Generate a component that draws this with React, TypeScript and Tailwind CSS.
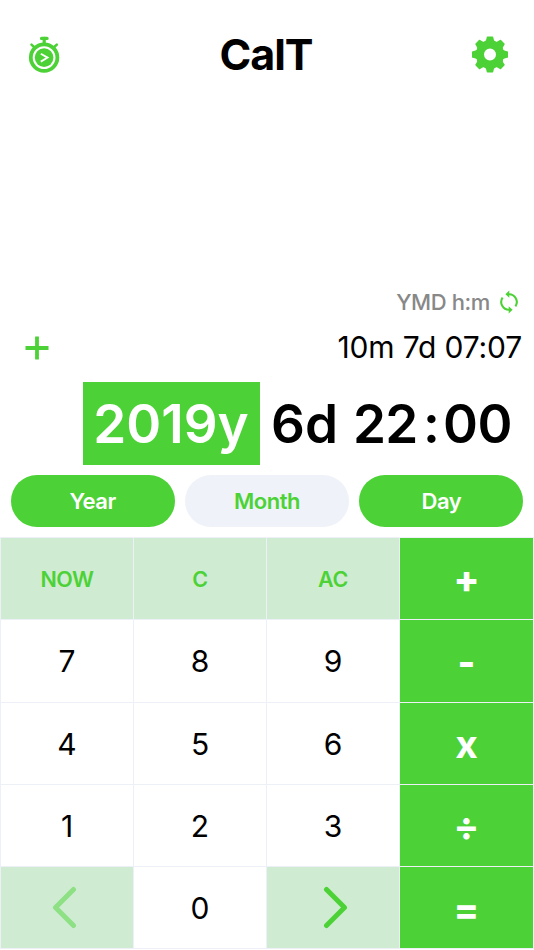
import type { ReactNode } from "react";

function StopwatchIcon() {
  return (
    <svg width="34" height="38" viewBox="0 0 34 38" fill="none" stroke="#4cd236">
      <path d="M14.5 2.4h5.6M17.2 2v6" strokeWidth="3.2" strokeLinecap="round" />
      <path d="M4.5 8.6l3.6 3.4M29.8 8.6l-3.6 3.4" strokeWidth="2.6" strokeLinecap="round" />
      <circle cx="17.1" cy="21.6" r="13.3" strokeWidth="3.8" />
      <circle cx="17.1" cy="21.6" r="9.3" fill="#4cd236" stroke="none" />
      <path d="M13.8 17.7l6.8 3.9-6.8 4" stroke="#fff" strokeWidth="1.8" />
    </svg>
  );
}

function GearIcon() {
  const angles = [0, 45, 90, 135, 180, 225, 270, 315];
  return (
    <svg width="38" height="38" viewBox="-19 -18.5 38 38" fill="#4cd236">
      <circle r="10" fill="none" stroke="#4cd236" strokeWidth="8" />
      {angles.map((a) => (
        <path
          key={a}
          transform={`rotate(${a})`}
          d="M-6.5 -12.2C-4.3 -13 -3.8 -14.2 -3.3 -17.2Q-3.2 -18 -2.4 -18H2.4Q3.2 -18 3.3 -17.2C3.8 -14.2 4.3 -13 6.5 -12.2L4 -9H-4Z"
        />
      ))}
    </svg>
  );
}

function SyncIcon() {
  return (
    <svg width="18" height="24" viewBox="0 0 18 24" fill="none" stroke="#4cd236" strokeWidth="2.1">
      <path d="M8.5 4.2A7.8 7.8 0 0 1 15.4 16.4M9.5 19.8A7.8 7.8 0 0 1 2.6 7.6" />
      <path d="M9.3 .6v7.2L5.4 4.2ZM8.7 16.2v7.2l3.9-3.6Z" fill="#4cd236" stroke="none" />
    </svg>
  );
}

function Chevron({ left = false }: { left?: boolean }) {
  return (
    <svg width="26" height="43" viewBox="0 0 26 43" fill="none" stroke={left ? "#8ee085" : "#4cd236"} strokeWidth="5" strokeLinecap="round" strokeLinejoin="round">
      {left ? <path d="M21.5 3.5 3.5 21.5l18 18" /> : <path d="M4.5 3.5l18 18-18 18" />}
    </svg>
  );
}

function Pill({ children, on = true }: { children: ReactNode; on?: boolean }) {
  return (
    <button className={`h-[52px] flex-1 rounded-full pt-px text-[22px] font-semibold tracking-[-0.5px] ${on ? "bg-[#4cd236] text-white" : "bg-[#eff2f8] text-[#4cd236]"}`}>
      {children}
    </button>
  );
}

type Kind = "fn" | "num" | "op";
const styles: Record<Kind, string> = {
  fn: "bg-[#cfecd2] text-[#4cd236] text-[21.5px] font-semibold tracking-[-0.4px] pt-0.5",
  num: "bg-white text-black text-[30px]",
  op: "bg-[#4cd236] text-white text-[38px] font-extrabold",
};

const keys: { kind: Kind; label: ReactNode }[] = [
  { kind: "fn", label: "NOW" },
  { kind: "fn", label: "C" },
  { kind: "fn", label: "AC" },
  { kind: "op", label: "+" },
  { kind: "num", label: "7" },
  { kind: "num", label: "8" },
  { kind: "num", label: "9" },
  { kind: "op", label: <span className="pt-0.5">-</span> },
  { kind: "num", label: "4" },
  { kind: "num", label: "5" },
  { kind: "num", label: "6" },
  { kind: "op", label: <span className="text-[39px] font-bold">x</span> },
  { kind: "num", label: "1" },
  { kind: "num", label: "2" },
  { kind: "num", label: "3" },
  { kind: "op", label: <span className="font-bold">÷</span> },
  { kind: "fn", label: <span className="pr-1 pb-0.5"><Chevron left /></span> },
  { kind: "num", label: <span className="pt-px">0</span> },
  { kind: "fn", label: <span className="pb-0.5 pl-1"><Chevron /></span> },
  { kind: "op", label: <span className="pt-0.5 font-bold">=</span> },
];

export default function App() {
  return (
    <main className="flex h-[950px] w-[534px] flex-col overflow-hidden bg-white font-[Inter,'Liberation_Sans',sans-serif] text-black">
      <header className="flex h-[108px] items-center justify-between pt-px pr-[25px] pl-[27px]">
        <StopwatchIcon />
        <h1 className="text-[43px] leading-none font-bold tracking-[-1px]">CalT</h1>
        <GearIcon />
      </header>
      <section className="mt-[180px] flex h-7 items-center justify-end gap-2.5 pr-4">
        <span className="text-[22px] leading-7 font-medium tracking-[-0.4px] text-[#888]">YMD h:m</span>
        <SyncIcon />
      </section>
      <section className="flex h-16 items-center justify-between pr-3 pl-[25px]">
        <svg width="24" height="24" viewBox="0 0 24 24" stroke="#4cd236" strokeWidth="3.8">
          <path d="M12 .5v23M.5 12h23" />
        </svg>
        <span className="pb-0.5 text-[30px] tracking-[-0.15px]">10m 7d 07:07</span>
      </section>
      <section className="mt-0.5 flex h-[83px] items-center pl-[83px] text-[53px] font-semibold">
        <span className="flex h-[83px] w-[177px] items-center justify-center bg-[#4cd236] pt-0.5 pr-px text-white">2019y</span>
        <span className="ml-[11px] w-[82px] pt-0.5">6d</span>
        <span className="w-[70px] pt-0.5 tracking-[-0.8px]">22</span>
        <span className="w-[20px] pt-0.5">:</span>
        <span className="pt-0.5 tracking-[-0.5px]">00</span>
      </section>
      <section className="mt-2.5 flex gap-[10px] px-[10.5px]">
        <Pill>Year</Pill>
        <Pill on={false}>Month</Pill>
        <Pill>Day</Pill>
      </section>
      <section className="mt-2.5 grid h-[412px] grid-cols-[132px_132px_132px_133px] grid-rows-[81px_82px_81px_81px_81px] gap-px bg-[#eef0f8] p-px pr-0">
        {keys.map(({ kind, label }, i) => (
          <button key={i} className={`flex items-center justify-center leading-none ${styles[kind]}`}>
            {label}
          </button>
        ))}
      </section>
    </main>
  );
}
